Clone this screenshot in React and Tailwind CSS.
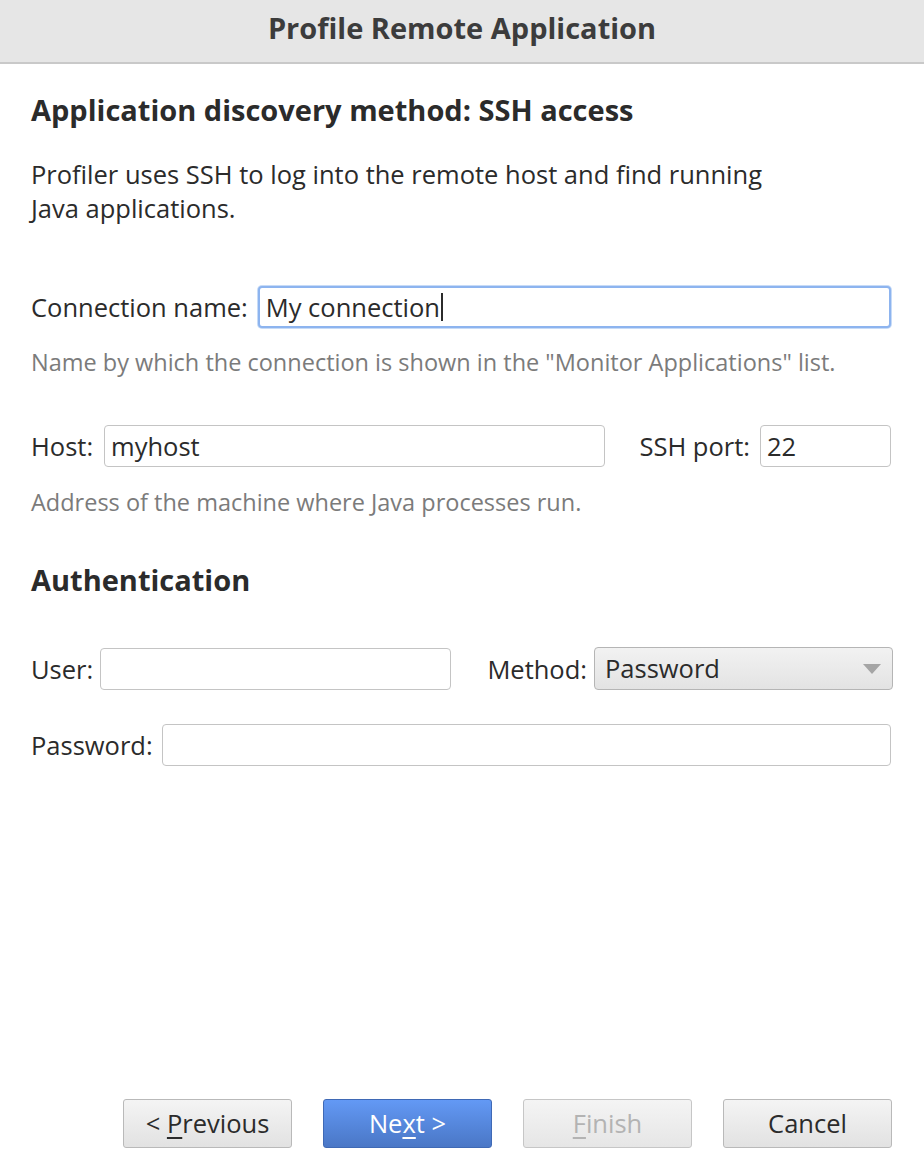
import React from "react";

const font = { fontFamily: "'Open Sans', 'Noto Sans', sans-serif" };

const Field = ({ value, className = "", focused }) => (
  <div
    className={
      "h-[42px] flex items-center px-[6px] bg-white rounded-[4px] text-[25.5px] text-[#2b2b2b] " +
      (focused
        ? "border-2 border-[#8db4ef] shadow-[0_0_0_1px_#c7dbf7] "
        : "border border-[#c4c4c4] ") +
      className
    }
  >
    {value}
    {focused && <span className="inline-block w-[1.5px] h-[28px] bg-[#2b2b2b] ml-[1px]" />}
  </div>
);

const Btn = ({ children, variant = "default" }) => {
  const styles = {
    default:
      "bg-gradient-to-b from-[#f4f4f4] to-[#e2e2e2] border-[#b9b9b9] text-[#2b2b2b]",
    primary:
      "bg-gradient-to-b from-[#6399f5] to-[#4a77c6] border-[#3f69b5] text-white",
    disabled:
      "bg-gradient-to-b from-[#f4f4f4] to-[#e6e6e6] border-[#c6c6c6] text-[#b3b3b3]",
  };
  return (
    <button
      className={
        "w-[169px] h-[49px] rounded-[3px] border text-[25.5px] flex items-center justify-center " +
        styles[variant]
      }
    >
      {children}
    </button>
  );
};

const label = "text-[25.5px] text-[#2b2b2b] shrink-0 leading-[34px]";
const hint = "text-[23.5px] text-[#7b7b7b] leading-[30px]";

export default function App() {
  return (
    <div className="w-[924px] h-[1173px] bg-white flex flex-col" style={font}>
      <div className="h-[64px] bg-[#e6e6e6] border-b-2 border-[#c9c9c9] flex items-center justify-center shrink-0">
        <span className="text-[29px] font-bold text-[#3c3c3c] leading-[40px] -mt-[6px]">
          Profile Remote Application
        </span>
      </div>

      <div className="flex-1 flex flex-col px-[31px]">
        <h1 className="mt-[28px] text-[29px] font-bold text-[#2b2b2b] leading-[36px]">
          Application discovery method: SSH access
        </h1>

        <p className="mt-[29px] text-[25.5px] leading-[34px] text-[#2b2b2b]">
          Profiler uses SSH to log into the remote host and find running
          <br />
          Java applications.
        </p>

        <div className="mt-[61px] flex items-center gap-[10px] pr-[2px]">
          <span className={label}>Connection name:</span>
          <Field value="My connection" focused className="flex-1" />
        </div>
        <p className={"mt-[19px] " + hint}>
          Name by which the connection is shown in the "Monitor Applications" list.
        </p>

        <div className="mt-[48px] flex items-center pr-[2px]">
          <span className={label}>Host:</span>
          <Field value="myhost" className="ml-[11px] w-[501px]" />
          <span className={"ml-auto " + label}>SSH port:</span>
          <Field value="22" className="ml-[10px] w-[131px]" />
        </div>
        <p className={"mt-[20px] " + hint}>
          Address of the machine where Java processes run.
        </p>

        <h2 className="mt-[45px] text-[29px] font-bold text-[#2b2b2b] leading-[36px]">
          Authentication
        </h2>

        <div className="mt-[49px] flex items-center">
          <span className={label}>User:</span>
          <Field value="" className="ml-[7px] w-[351px]" />
          <span className={"ml-auto " + label}>Method:</span>
          <div className="ml-[7px] w-[299px] h-[43px] rounded-[4px] border border-[#b5b5b5] bg-gradient-to-b from-[#f2f2f2] to-[#e3e3e3] flex items-center justify-between pl-[10px] pr-[10px]">
            <span className="text-[25.5px] text-[#2b2b2b]">Password</span>
            <svg width="20" height="12" viewBox="0 0 20 12">
              <polygon points="1,1 19,1 10,11" fill="#a5a5a5" />
            </svg>
          </div>
        </div>

        <div className="mt-[34px] flex items-center pr-[2px]">
          <span className={label}>Password:</span>
          <Field value="" className="ml-[9px] flex-1" />
        </div>

        <div className="mt-auto mb-[25px] flex justify-end gap-[31px] pr-[1px]">
          <Btn>
            &lt;&nbsp;<span className="underline underline-offset-4">P</span>revious
          </Btn>
          <Btn variant="primary">
            Ne<span className="underline underline-offset-4">x</span>t &gt;
          </Btn>
          <Btn variant="disabled">
            <span className="underline underline-offset-4">F</span>inish
          </Btn>
          <Btn>Cancel</Btn>
        </div>
      </div>
    </div>
  );
}
